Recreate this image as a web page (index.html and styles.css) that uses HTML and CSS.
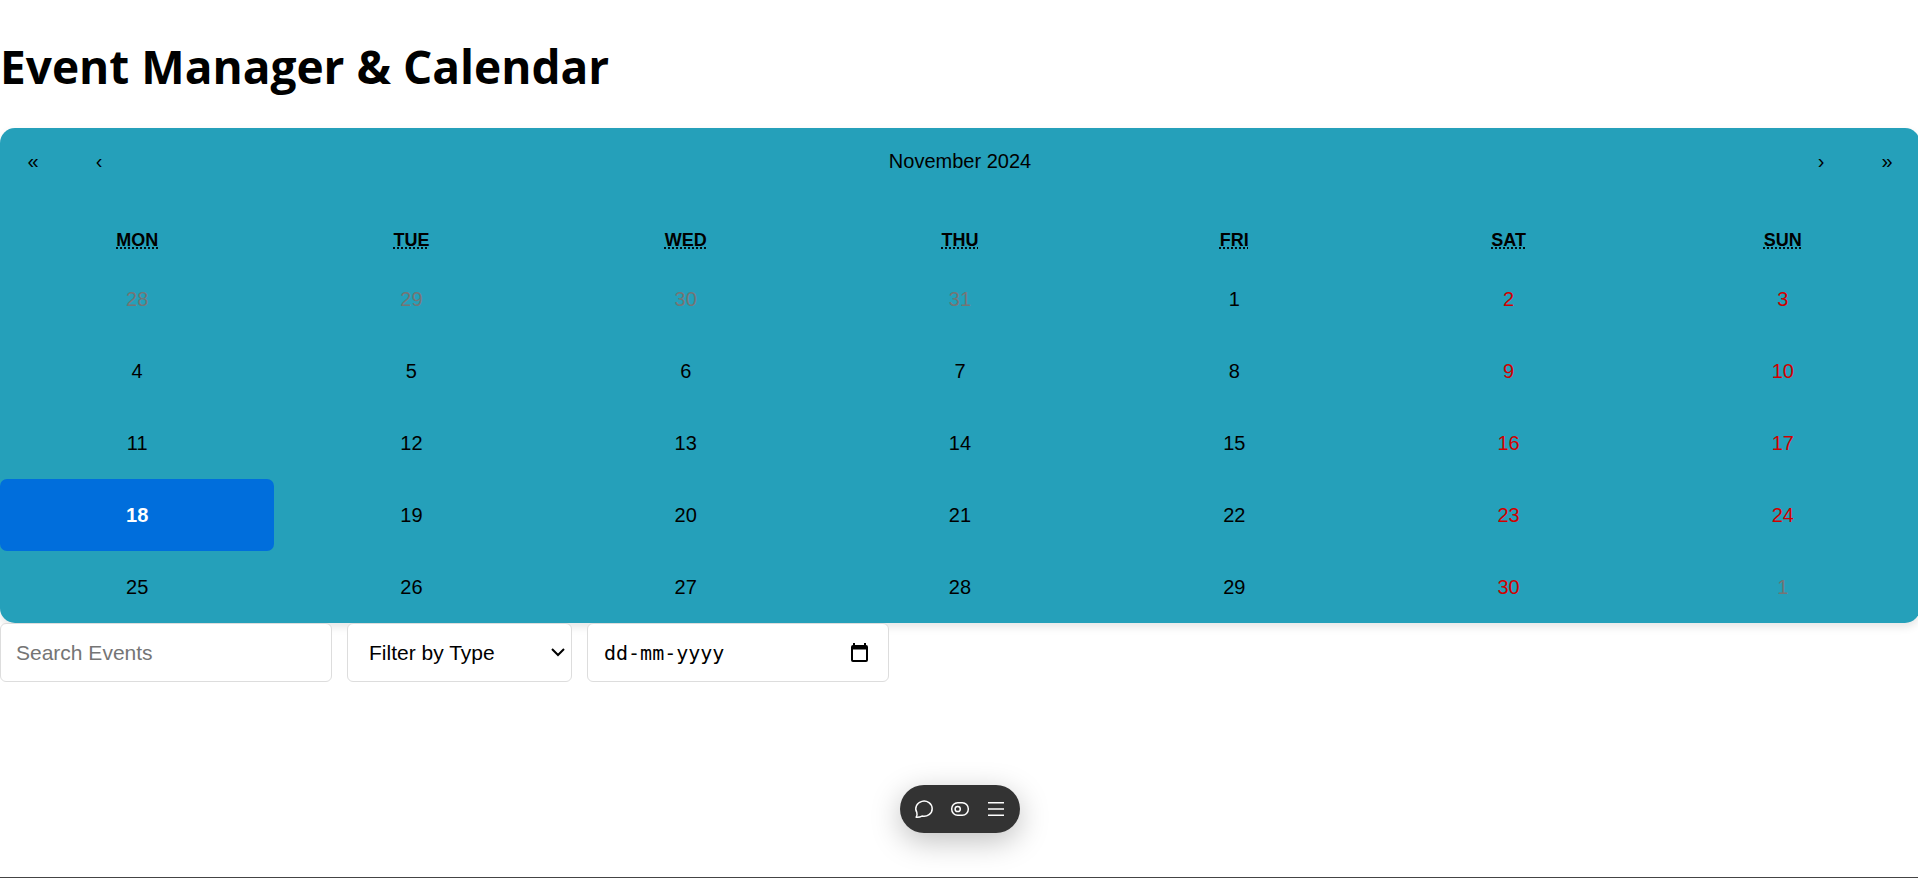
FILE: index.html
```html
<!DOCTYPE html>
<html lang="en">
<head>
<meta charset="utf-8">
<title>Event Manager &amp; Calendar</title>
<link rel="stylesheet" href="styles.css">
</head>
<body>
<main class="page">
  <h1 class="title">Event Manager &amp; Calendar</h1>
  <section class="calendar">
    <div class="nav">
      <button class="arrow" aria-label="Previous year">«</button>
      <button class="arrow" aria-label="Previous month">‹</button>
      <button class="month">November 2024</button>
      <button class="arrow" aria-label="Next month">›</button>
      <button class="arrow" aria-label="Next year">»</button>
    </div>
    <div class="weekdays">
      <div><abbr title="Monday">Mon</abbr></div>
      <div><abbr title="Tuesday">Tue</abbr></div>
      <div><abbr title="Wednesday">Wed</abbr></div>
      <div><abbr title="Thursday">Thu</abbr></div>
      <div><abbr title="Friday">Fri</abbr></div>
      <div><abbr title="Saturday">Sat</abbr></div>
      <div><abbr title="Sunday">Sun</abbr></div>
    </div>
    <div class="days">
      <button class="day outside">28</button><button class="day outside">29</button><button class="day outside">30</button><button class="day outside">31</button><button class="day">1</button><button class="day weekend">2</button><button class="day weekend">3</button>
      <button class="day">4</button><button class="day">5</button><button class="day">6</button><button class="day">7</button><button class="day">8</button><button class="day weekend">9</button><button class="day weekend">10</button>
      <button class="day">11</button><button class="day">12</button><button class="day">13</button><button class="day">14</button><button class="day">15</button><button class="day weekend">16</button><button class="day weekend">17</button>
      <button class="day active">18</button><button class="day">19</button><button class="day">20</button><button class="day">21</button><button class="day">22</button><button class="day weekend">23</button><button class="day weekend">24</button>
      <button class="day">25</button><button class="day">26</button><button class="day">27</button><button class="day">28</button><button class="day">29</button><button class="day weekend">30</button><button class="day outside">1</button>
    </div>
  </section>
  <form class="filters">
    <input class="field search" type="text" placeholder="Search Events" aria-label="Search events">
    <div class="picker">
      <select class="field type" aria-label="Filter by type"><option>Filter by Type</option></select>
      <svg class="chevron" width="14" height="9" viewBox="0 0 14 9" fill="none" stroke="#000" stroke-width="2"><path d="M1 1l6 6 6-6"/></svg>
    </div>
    <div class="field date">
      <input class="date-text" type="text" placeholder="dd-mm-yyyy" aria-label="Event date">
      <button class="date-open" type="button" aria-label="Open date picker">
        <svg width="17" height="19" viewBox="0 0 17 19"><path fill="#000" fill-rule="evenodd" d="M2 0h2v2h9V0h2v2a2 2 0 0 1 2 2v13a2 2 0 0 1-2 2H2a2 2 0 0 1-2-2V4a2 2 0 0 1 2-2zM2 6.500v10.500h13V6.500z"/></svg>
      </button>
    </div>
  </form>
</main>
<div class="toolbar">
  <button class="tool" aria-label="Comment"><svg width="20" height="20" viewBox="0 0 20 20" fill="none" stroke="#fff" stroke-width="1.5" stroke-linejoin="round"><path d="M2.200 18.200c.9-1.500 1.200-2.800.6-4.800A8.200 7.600 0 1 1 8 17.100c-1.800.9-3.500 1.300-5.800 1.100z"/></svg></button>
  <button class="tool" aria-label="Preview"><svg width="20" height="20" viewBox="0 0 20 20" fill="none" stroke="#fff" stroke-width="1.500"><rect x="1.700" y="3.700" width="16.600" height="12.600" rx="6"/><circle cx="7.700" cy="10" r="2.600"/></svg></button>
  <button class="tool" aria-label="Menu"><svg width="20" height="20" viewBox="0 0 20 20" stroke="#fff" stroke-width="1.5"><path d="M2 3.800h16M2 10h16M2 16.200h16"/></svg></button>
</div>
</body>
</html>
```
FILE: styles.css
```css
* {
  box-sizing: border-box;
}

body {
  margin: 0;
  min-height: 100vh;
  border-bottom: 1px solid #444;
  background: #fff;
  color: #000;
  font: 20px/24px "Liberation Sans", Arial, sans-serif;
  overflow-x: hidden;
}

button,
input,
select {
  font: inherit;
  color: inherit;
}

button {
  margin: 0;
  padding: 0;
  border: 0;
  background: none;
  cursor: pointer;
}

.page {
  width: calc(100% + 2px);
  padding-top: 36px;
}

.title {
  margin: 0 0 32px;
  font: 700 46px/60px "Open Sans", "Noto Sans", sans-serif;
}

.calendar {
  border-radius: 15px;
  background: #25a0ba;
  box-shadow: 0 4px 8px rgba(0, 0, 0, 0.1);
}

.nav {
  display: flex;
  height: 66px;
  margin-bottom: 20px;
}

.arrow {
  width: 66px;
}

.month {
  flex: 1;
}

.weekdays,
.days {
  display: grid;
  grid-template-columns: repeat(7, 1fr);
}

.weekdays {
  padding: 14px 0 11px;
  text-align: center;
  text-transform: uppercase;
  font-size: 18px;
  font-weight: 700;
}

.weekdays abbr {
  text-underline-offset: 2px;
}

.day {
  padding: 24px 0;
}

.weekend {
  color: #d10000;
}

.outside {
  color: #757575;
}

.active {
  border-radius: 7px;
  background: #006edc;
  color: #fff;
  font-weight: 700;
}

.filters {
  display: flex;
  gap: 15px;
}

.field {
  height: 59px;
  padding: 0 15px;
  border: 1px solid #ddd;
  border-radius: 6px;
  background: #fff;
  font-size: 21px;
}

.search {
  width: 332px;
}

.search::placeholder {
  color: #757575;
}

.picker {
  position: relative;
}

.type {
  width: 225px;
  padding-left: 21px;
  appearance: none;
}

.chevron {
  position: absolute;
  top: 25px;
  right: 7px;
  pointer-events: none;
}

.date {
  display: flex;
  align-items: center;
  width: 302px;
  padding: 0 20px 0 16px;
}

.date-text {
  flex: 1;
  min-width: 0;
  padding: 0;
  border: 0;
  outline: 0;
  font-family: "DejaVu Sans Mono", monospace;
  font-size: 20px;
}

.date-text::placeholder {
  color: #000;
}

.date-open {
  display: flex;
}

.toolbar {
  position: fixed;
  bottom: 45px;
  left: calc(50% + 1px);
  display: flex;
  align-items: center;
  justify-content: space-between;
  width: 120px;
  height: 48px;
  padding: 0 14px;
  border-radius: 24px;
  background: #333;
  box-shadow: 0 8px 30px rgba(0, 0, 0, 0.25);
  transform: translateX(-50%);
}

.tool {
  display: flex;
}
```
